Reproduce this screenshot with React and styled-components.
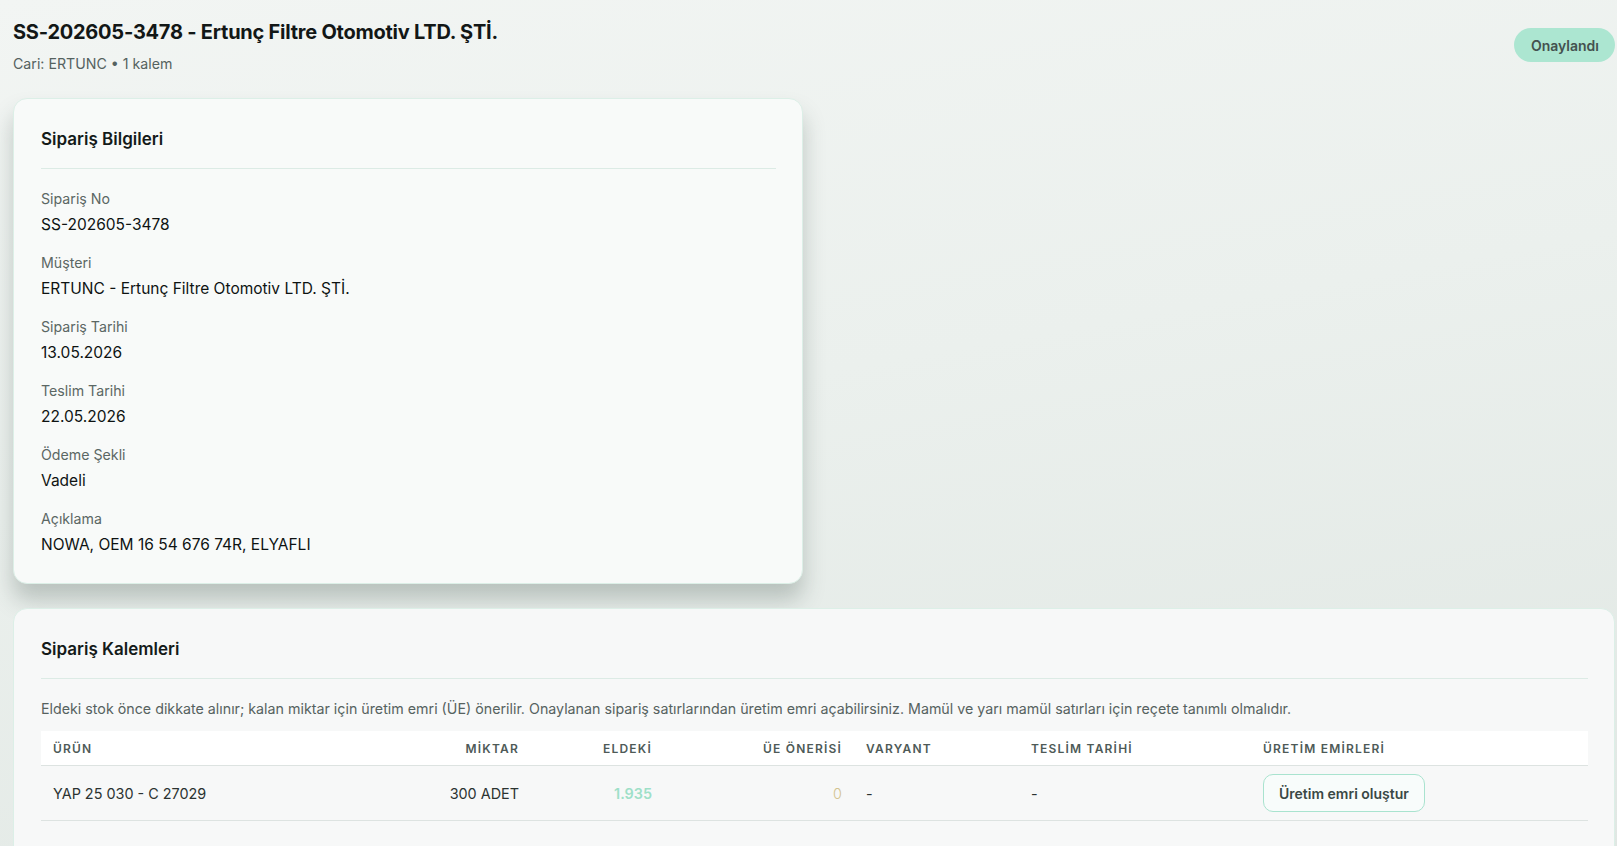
import React from 'react';
import styled, { createGlobalStyle } from 'styled-components';

const GlobalStyle = createGlobalStyle`
  html, body {
    margin: 0;
    padding: 0;
  }
  body {
    font-family: Inter, "Noto Sans", "Liberation Sans", sans-serif;
    color: #141a19;
    background: linear-gradient(170deg, #f2f5f3 0%, #ebf0ed 45%, #e0e7e3 100%);
    min-height: 100vh;
    overflow: hidden;
  }
`;

const order = {
  no: 'SS-202605-3478',
  customer: 'ERTUNC - Ertunç Filtre Otomotiv LTD. ŞTİ.',
  date: '13.05.2026',
  delivery: '22.05.2026',
  payment: 'Vadeli',
  note: 'NOWA, OEM 16 54 676 74R, ELYAFLI',
};

const fields = [
  { label: 'Sipariş No', value: order.no },
  { label: 'Müşteri', value: order.customer },
  { label: 'Sipariş Tarihi', value: order.date },
  { label: 'Teslim Tarihi', value: order.delivery },
  { label: 'Ödeme Şekli', value: order.payment },
  { label: 'Açıklama', value: order.note },
];

const columns = [
  { key: 'product', title: 'Ürün', width: 360 },
  { key: 'qty', title: 'Miktar', width: 130, align: 'right' },
  { key: 'stock', title: 'Eldeki', width: 133, align: 'right' },
  { key: 'suggest', title: 'ÜE Önerisi', width: 190, align: 'right' },
  { key: 'variant', title: 'Varyant', width: 165 },
  { key: 'delivery', title: 'Teslim Tarihi', width: 232 },
  { key: 'orders', title: 'Üretim Emirleri' },
];

const rows = [
  { id: 1, product: 'YAP 25 030 - C 27029', qty: '300 ADET', stock: '1.935', suggest: '0', variant: '-', delivery: '-' },
];

const App = () => {
  return (
    <>
      <GlobalStyle />
      <Page>
        <Header>
          <TitleBox>
            <Title>SS-202605-3478 - Ertunç Filtre Otomotiv LTD. ŞTİ.</Title>
            <SubTitle>Cari: ERTUNC • 1 kalem</SubTitle>
          </TitleBox>
          <StatusBadge>Onaylandı</StatusBadge>
        </Header>

        <InfoCard>
          <CardTitle>Sipariş Bilgileri</CardTitle>
          <FieldList>
            {fields.map((f) => (
              <Field key={f.label}>
                <FieldLabel>{f.label}</FieldLabel>
                <FieldValue>{f.value}</FieldValue>
              </Field>
            ))}
          </FieldList>
        </InfoCard>

        <ItemsCard>
          <CardTitle>Sipariş Kalemleri</CardTitle>
          <Hint>
            Eldeki stok önce dikkate alınır; kalan miktar için üretim emri (ÜE) önerilir. Onaylanan sipariş
            satırlarından üretim emri açabilirsiniz. Mamül ve yarı mamül satırları için reçete tanımlı olmalıdır.
          </Hint>
          <Table>
            <colgroup>
              {columns.map((c) => (
                <col key={c.key} style={c.width ? { width: c.width } : undefined} />
              ))}
            </colgroup>
            <thead>
              <tr>
                {columns.map((c) => (
                  <Th key={c.key} align={c.align}>
                    {c.title.toLocaleUpperCase('tr-TR')}
                  </Th>
                ))}
              </tr>
            </thead>
            <tbody>
              {rows.map((r) => (
                <tr key={r.id}>
                  <Td>{r.product}</Td>
                  <Td align='right'>{r.qty}</Td>
                  <Td align='right'>
                    <StockValue>{r.stock}</StockValue>
                  </Td>
                  <Td align='right'>
                    <SuggestValue>{r.suggest}</SuggestValue>
                  </Td>
                  <Td>{r.variant}</Td>
                  <Td>{r.delivery}</Td>
                  <Td>
                    <CreateButton type='button'>Üretim emri oluştur</CreateButton>
                  </Td>
                </tr>
              ))}
            </tbody>
          </Table>
        </ItemsCard>
      </Page>
    </>
  );
};

export default App;

const Page = styled.div`
  padding: 18px 2px 0 13px;
  display: flex;
  flex-direction: column;
`;

const Header = styled.header`
  display: flex;
  justify-content: space-between;
  align-items: flex-start;
`;

const TitleBox = styled.div`
  display: flex;
  flex-direction: column;
`;

const Title = styled.h1`
  margin: 0;
  font-size: 20px;
  line-height: 28px;
  font-weight: 700;
  letter-spacing: -0.012em;
  color: #121716;
`;

const SubTitle = styled.div`
  margin-top: 8px;
  font-size: 14.2px;
  line-height: 20px;
  color: #55625f;
`;

const StatusBadge = styled.span`
  margin-top: 10px;
  display: inline-flex;
  align-items: center;
  height: 34px;
  padding: 0 16px 0 17px;
  border-radius: 999px;
  background: #ace6d1;
  color: #44524f;
  font-size: 14px;
  font-weight: 600;
`;

const Card = styled.section`
  background: #f8faf9;
  border: 1px solid #dcefe7;
  border-radius: 14px;
  padding: 28px 26px 26px 27px;
  box-sizing: border-box;
`;

const InfoCard = styled(Card)`
  margin-top: 24px;
  width: 790px;
  box-shadow: 0 16px 22px rgba(50, 70, 62, 0.26);
`;

const ItemsCard = styled(Card)`
  margin-top: 24px;
  padding-bottom: 40px;
  background: #f7f8f8;
`;

const CardTitle = styled.h2`
  margin: 0;
  padding-bottom: 17px;
  border-bottom: 1px solid #dcebe5;
  font-size: 17px;
  line-height: 24px;
  font-weight: 600;
  color: #141a19;
`;

const FieldList = styled.div`
  margin-top: 20px;
  display: flex;
  flex-direction: column;
  gap: 16px;
`;

const Field = styled.div`
  display: flex;
  flex-direction: column;
  gap: 4px;
`;

const FieldLabel = styled.span`
  font-size: 14.2px;
  line-height: 20px;
  color: #5b6764;
`;

const FieldValue = styled.span`
  font-size: 15.5px;
  line-height: 24px;
  color: #0e1312;
`;

const Hint = styled.p`
  margin: 20px 0 12px;
  font-size: 14.25px;
  line-height: 20px;
  color: #56625f;
`;

const Table = styled.table`
  width: 100%;
  border-collapse: collapse;
  table-layout: fixed;
`;

const Th = styled.th`
  height: 34px;
  padding: 0 12px;
  background: #ffffff;
  border-bottom: 1px solid #dde3e1;
  text-align: ${({ align }) => align || 'left'};
  font-size: 12px;
  font-weight: 600;
  letter-spacing: 0.1em;
  color: #4e5a57;
`;

const Td = styled.td`
  height: 54px;
  padding: 0 12px;
  border-bottom: 1px solid #dde3e1;
  text-align: ${({ align }) => align || 'left'};
  font-size: 14.4px;
  color: #2b3331;
`;

const StockValue = styled.span`
  color: #9ee0c8;
  font-weight: 600;
`;

const SuggestValue = styled.span`
  color: #d3c38f;
  font-weight: 300;
`;

const CreateButton = styled.button`
  height: 38px;
  padding: 0 15px;
  border: 1px solid #a9e3cf;
  border-radius: 10px;
  background: #f8fcfb;
  font-family: inherit;
  font-size: 14px;
  font-weight: 600;
  color: #3a4845;
  cursor: pointer;
`;
